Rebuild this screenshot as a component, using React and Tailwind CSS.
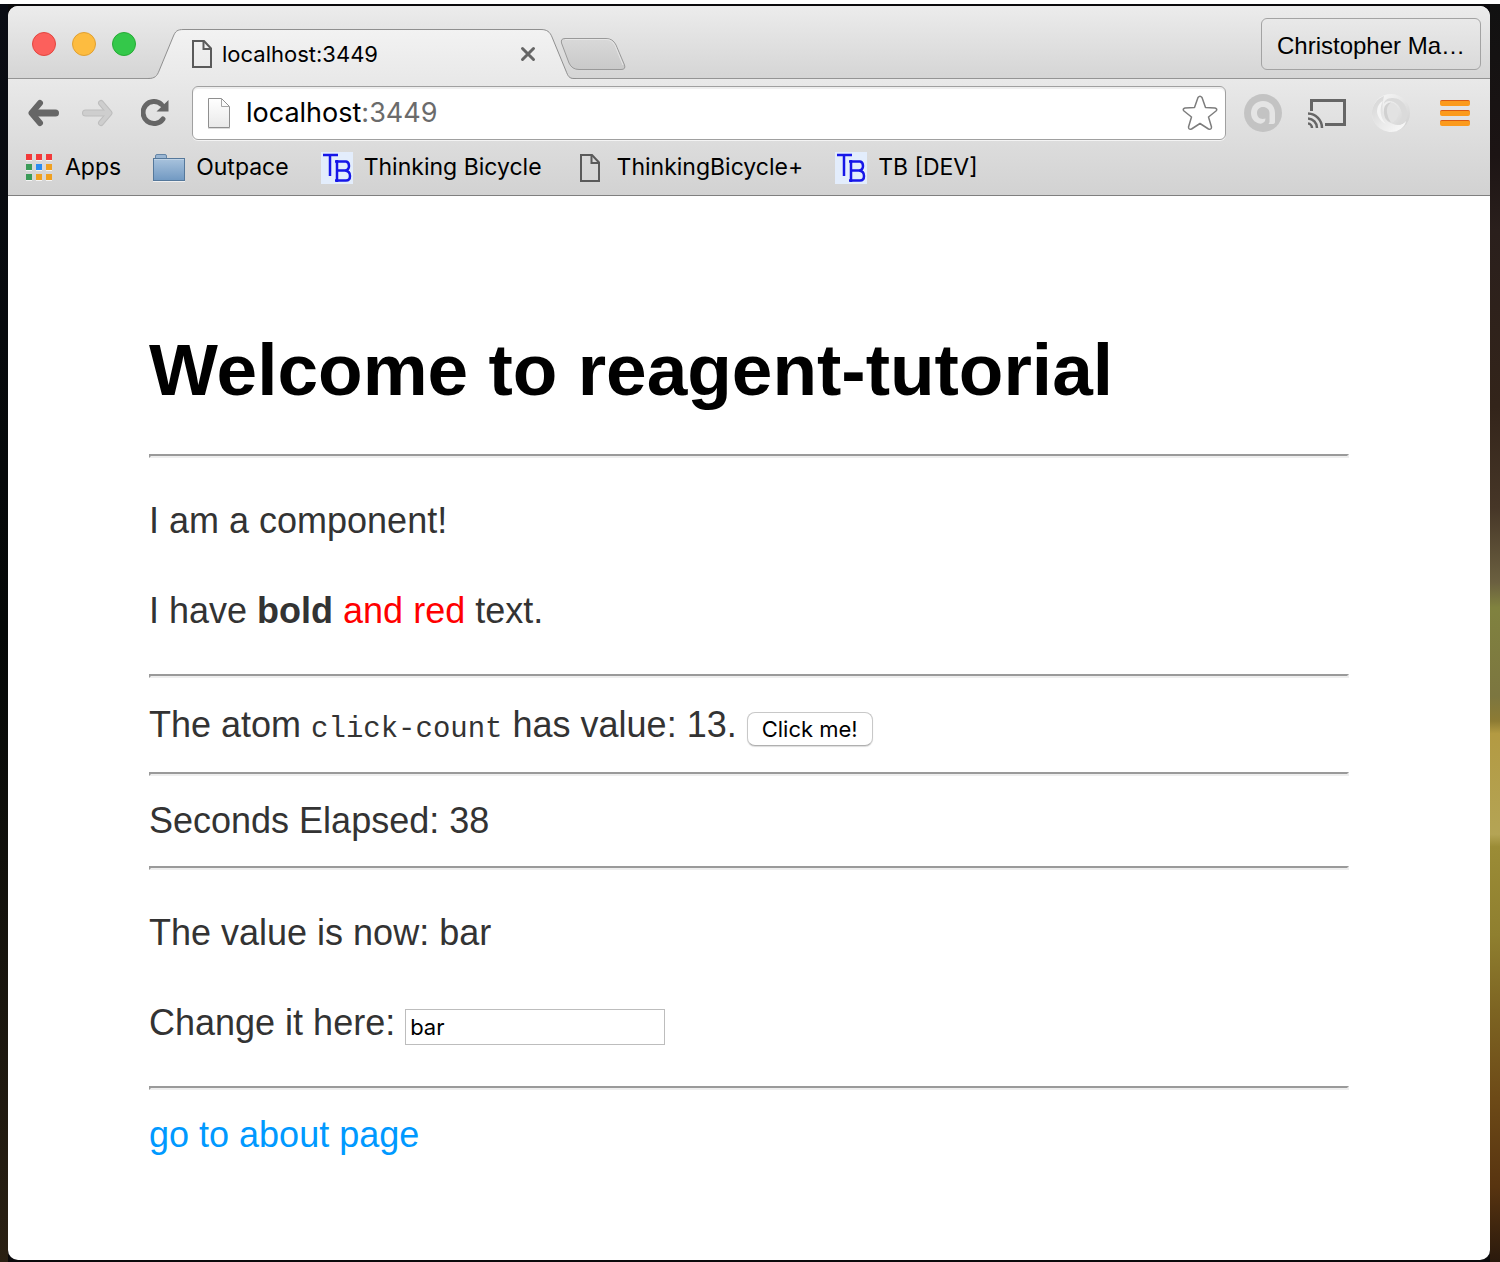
import React, { useState } from "react";

function PageIcon({ className, width = 20, height = 28 }) {
  return (
    <svg className={className} width={width} height={height} viewBox="0 0 20 28" fill="none" stroke="#5a5a5a" strokeWidth="2" aria-hidden="true">
      <path d="M1 1H12L19 8.500V27H1Z" />
      <path d="M11.500 1V9H19" />
    </svg>
  );
}

function OmniboxPageIcon() {
  return (
    <svg className="shrink-0" width="24" height="32" viewBox="0 0 24 32" aria-hidden="true">
      <defs>
        <linearGradient id="sheet" x1="0" y1="0" x2="0" y2="1">
          <stop offset="0" stopColor="#ffffff" />
          <stop offset="1" stopColor="#e9e9e9" />
        </linearGradient>
      </defs>
      <path d="M1.500 1.500H14.500L22.500 9.500V30.500H1.500Z" fill="url(#sheet)" stroke="#8f8f8f" />
      <path d="M14.500 1.500V9.500H22.500" fill="none" stroke="#a5a5a5" />
      <path d="M1 31.500H23" stroke="#dcdcdc" />
    </svg>
  );
}

function AppsIcon() {
  const colors = ["#f23a3a", "#f23a3a", "#f23a3a", "#3b9b58", "#2a8cf0", "#f0a020", "#3b9b58", "#f0a020", "#f0a020"];
  return (
    <svg width="28" height="27" viewBox="0 0 28 27" className="shrink-0" aria-hidden="true">
      {colors.map((c, i) => (
        <g key={i}>
          <rect x={(i % 3) * 10} y={Math.floor(i / 3) * 10 + 1} width="6" height="6" fill="#f4f4f4" />
          <rect x={(i % 3) * 10} y={Math.floor(i / 3) * 10} width="6" height="6" fill={c} />
        </g>
      ))}
    </svg>
  );
}

function FolderIcon() {
  return (
    <svg width="32" height="28" viewBox="0 0 32 28" className="shrink-0" aria-hidden="true">
      <defs>
        <linearGradient id="folder" x1="0" y1="0" x2="0" y2="1">
          <stop offset="0" stopColor="#a9c3dd" />
          <stop offset="1" stopColor="#7199c2" />
        </linearGradient>
      </defs>
      <path d="M2.500 5V2Q2.500 .5 4 .5H12Q13.500 .5 13.500 2V5" fill="#9ab6d3" stroke="#6485a6" />
      <rect x=".5" y="4.500" width="31" height="22" fill="url(#folder)" stroke="#55789b" />
      <path d="M1 5.500H31" stroke="#bfd3e6" />
      <path d="M0 27.500H32" stroke="#f0f0f0" />
    </svg>
  );
}

function BicycleIcon() {
  return (
    <svg width="32" height="32" viewBox="0 0 32 32" className="shrink-0" fill="none" stroke="#1616e8" aria-hidden="true">
      <rect width="32" height="32" fill="#e3edfc" stroke="none" />
      <path d="M2 3H17M9 3V24" strokeWidth="2.500" />
      <path d="M14 9.500H25Q28 10 28 14Q28 18 24 18.500Q29 19 29 24Q29 28.500 25 28.500H14M16 8V30M16 18.500H25" strokeWidth="2.500" />
    </svg>
  );
}

function TabShape() {
  return (
    <svg className="absolute inset-0 h-full w-full" viewBox="0 0 428 50" preserveAspectRatio="none" aria-hidden="true">
      <defs>
        <linearGradient id="tab" x1="0" y1="0" x2="0" y2="1">
          <stop offset="0" stopColor="#f2f2f2" />
          <stop offset="1" stopColor="#e9e9e9" />
        </linearGradient>
      </defs>
      <path d="M0 49.500C7 49.500 9 47 11 42L25 8C27.500 2 29 .5 36 .5H393C399 .5 402 3 404 8L418 42C420 47 421 49.500 426 49.500V50H0Z" fill="url(#tab)" />
      <path d="M0 49.500C7 49.500 9 47 11 42L25 8C27.500 2 29 .5 36 .5H393C399 .5 402 3 404 8L418 42C420 47 421 49.500 426 49.500H428" fill="none" stroke="#8f8f8f" />
    </svg>
  );
}

function TabStrip() {
  return (
    <div className="flex h-[73px] items-end border-b border-[#949494] bg-linear-to-b from-[#ececec] to-[#d5d5d5] font-['Inter',sans-serif]">
      <div className="flex gap-4 self-start pt-[26px] pl-6">
        <button aria-label="Close window" className="size-6 rounded-full border border-[#e2463f] bg-[#fc605c]" />
        <button aria-label="Minimize window" className="size-6 rounded-full border border-[#e0a032] bg-[#fdbc40]" />
        <button aria-label="Zoom window" className="size-6 rounded-full border border-[#27ab35] bg-[#34c84a]" />
      </div>
      <div className="relative -mb-px ml-3 flex h-[50px] w-[428px] shrink-0 items-center">
        <TabShape />
        <PageIcon className="relative ml-11" />
        <span className="relative ml-2.5 flex-1 text-[22px] text-black">localhost:3449</span>
        <button aria-label="Close tab" className="relative mr-10">
          <svg width="16" height="16" viewBox="0 0 16 16" stroke="#666" strokeWidth="3" strokeLinecap="round" aria-hidden="true">
            <path d="M2.500 2.500L13.500 13.500M13.500 2.500L2.500 13.500" />
          </svg>
        </button>
      </div>
      <button aria-label="New tab" className="-ml-4 mb-[7px] shrink-0">
        <svg width="66" height="34" viewBox="0 0 66 34" aria-hidden="true">
          <defs>
            <linearGradient id="newtab" x1="0" y1="0" x2="0" y2="1">
              <stop offset="0" stopColor="#d9d9d9" />
              <stop offset="1" stopColor="#c9c9c9" />
            </linearGradient>
          </defs>
          <path d="M5 1.500H46Q53 1.500 56 8L64.500 28Q66 32.500 61 32.500H19Q12 32.500 9 26L1.500 6Q.5 1.500 5 1.500Z" fill="url(#newtab)" stroke="#999" />
          <path d="M5 2.500H46Q52 2.500 55 8.500L63 28" fill="none" stroke="#e6e6e6" />
        </svg>
      </button>
      <button className="mr-[9px] mb-2 ml-auto h-[52px] w-[220px] shrink-0 rounded-md border border-[#a3a3a3] bg-linear-to-b from-[#e9e9e9] to-[#dadada] pt-1 font-['Liberation_Sans',sans-serif] text-2xl text-black">
        Christopher Ma…
      </button>
    </div>
  );
}

function Toolbar() {
  return (
    <div className="flex items-center pt-[7px] pr-5 pl-[19px]">
      <button aria-label="Back" className="mr-[23px]">
        <svg width="32" height="28" viewBox="0 0 32 28" fill="none" stroke="#666" strokeWidth="7" strokeLinecap="round" aria-hidden="true">
          <path d="M6 14H28.500" />
          <path d="M13 4L4.500 14L13 24" strokeWidth="6" strokeLinejoin="round" />
        </svg>
      </button>
      <button aria-label="Forward" className="mr-[27px]" disabled>
        <svg width="32" height="28" viewBox="0 0 32 28" fill="none" stroke="#bebebe" strokeWidth="7" strokeLinecap="round" aria-hidden="true">
          <path d="M26 14H3.500" />
          <path d="M19 4L27.500 14L19 24" strokeWidth="6" strokeLinejoin="round" />
          <path d="M26 14H3.500" stroke="#cecece" strokeWidth="5" />
          <path d="M19 4L27.500 14L19 24" stroke="#cecece" strokeWidth="4" strokeLinejoin="round" />
        </svg>
      </button>
      <button aria-label="Reload" className="mr-[23px]">
        <svg width="28" height="28" viewBox="0 0 28 28" fill="none" aria-hidden="true">
          <path d="M22 20A11 11 0 1 1 20.500 5.500" stroke="#666" strokeWidth="5" strokeLinecap="round" />
          <path d="M27.500 1V12.500H15.500Z" fill="#666" />
        </svg>
      </button>
      <div className="flex h-[54px] flex-1 items-center rounded-md border border-[#a0a0a0] bg-white pr-[7px] pl-3.5 font-['Inter',sans-serif] text-[27px] shadow-[inset_0_2px_1px_#eeeeee,0_1px_0_#f4f4f4]">
        <OmniboxPageIcon />
        <a href="#top" className="ml-[15px] flex-1 text-black">
          localhost<span className="text-[#6b6b6b]">:3449</span>
        </a>
        <button aria-label="Bookmark this page">
          <svg width="36" height="36" viewBox="0 0 36 36" fill="#fff" stroke="#7d7d7d" strokeWidth="1.500" strokeLinejoin="round" aria-hidden="true">
            <path d="M16 2.500Q18 0 20 2.500L23.500 12.500L33 13Q36 14 34 16L26.500 22L29.500 32Q29.500 35 26.500 34L18 28.500L9.500 34Q6.500 35 6.500 32L9.500 22L2 16Q0 14 3 13L12.500 12.500Z" />
          </svg>
        </button>
      </div>
      <button aria-label="Account extension" className="ml-[18px]">
        <svg width="38" height="38" viewBox="0 0 38 38" aria-hidden="true">
          <circle cx="19" cy="19" r="19" fill="#c3c3c3" />
          <path d="M19 7C26 7 31 12 31 19V28Q31 30 28 30H19C12 30 7 26 7 19C7 12 12 7 19 7Z" fill="#e4e4e4" />
          <path d="M19 13C22.500 13 25.500 15.500 25.500 19V28Q25 31 21 31L15 30.500Q21.500 29 21.500 24.500C16 26 13 23 13 19C13 15.500 15.500 13 19 13Z" fill="#c3c3c3" />
        </svg>
      </button>
      <button aria-label="Cast" className="ml-[26px]">
        <svg width="38" height="30" viewBox="0 0 38 30" fill="none" stroke="#666" aria-hidden="true">
          <path d="M3.500 13V2.500H36.500V26.500H17" strokeWidth="3" />
          <path d="M0 15.500A14.500 14.500 0 0 1 14 30M0 20.500A9.500 9.500 0 0 1 9 30M0 25.500A4.500 4.500 0 0 1 4 30" strokeWidth="2.500" />
        </svg>
      </button>
      <button aria-label="Swirl extension" className="ml-[26px]">
        <svg width="38" height="38" viewBox="0 0 38 38" aria-hidden="true">
          <defs>
            <linearGradient id="swirlRight" x1="0" y1="0" x2="1" y2="1">
              <stop offset="0" stopColor="#fafafa" />
              <stop offset="0.5" stopColor="#e6e6e6" />
              <stop offset="1" stopColor="#cccccc" />
            </linearGradient>
            <linearGradient id="swirlLeft" x1="0" y1="0" x2="1" y2="1">
              <stop offset="0" stopColor="#d4d4d4" />
              <stop offset="0.6" stopColor="#ececec" />
              <stop offset="1" stopColor="#fbfbfb" />
            </linearGradient>
          </defs>
          <circle cx="19" cy="19" r="19" fill="url(#swirlRight)" />
          <path d="M12 2C5 5 0 11 0 19C0 29 9 38 19 38C27 38 33 33 34 27C31 31 26 32 21 30C12 27 8 18 12 2Z" fill="url(#swirlLeft)" />
          <path d="M12 10C14 6 21 6 26 11C31 17 31 25 27 31C30 30 33 28 34 26C38 18 33 4 20 4C15 4 12 7 12 10Z" fill="#dadada" />
          <path d="M11 7C7 14 8 24 14 30C10 28 6 24 5 18C5 13 7 9 11 7Z" fill="#f4f4f4" />
          <ellipse cx="19" cy="18.500" rx="7.500" ry="10" fill="#e2e2e2" />
          <path d="M12 15Q13 9 19 8.500Q14 12 15 19Q16 25 19 28.500Q11 26 12 15Z" fill="#d0d0d0" />
        </svg>
      </button>
      <button aria-label="Menu" className="ml-[30px] flex flex-col gap-1">
        <span className="h-1.5 w-[30px] rounded-xs border-t border-[#d95a14] bg-[#fb9a1c]" />
        <span className="h-1.5 w-[30px] rounded-xs border-t border-[#d95a14] bg-[#fb9a1c]" />
        <span className="h-1.5 w-[30px] rounded-xs border-t border-[#d95a14] bg-[#fb9a1c]" />
      </button>
    </div>
  );
}

function Bookmark({ icon, children }) {
  return (
    <a href="#bookmark" className="flex items-center gap-[11px] whitespace-nowrap">
      {icon}
      {children}
    </a>
  );
}

function BookmarksBar() {
  return (
    <nav aria-label="Bookmarks" className="flex h-[55px] items-center gap-8 pl-[18px] font-['Inter',sans-serif] text-[23px] text-black">
      <Bookmark icon={<AppsIcon />}>Apps</Bookmark>
      <Bookmark icon={<FolderIcon />}>Outpace</Bookmark>
      <Bookmark icon={<BicycleIcon />}>Thinking Bicycle</Bookmark>
      <Bookmark icon={<PageIcon className="mx-1.5" />}>ThinkingBicycle+</Bookmark>
      <Bookmark icon={<BicycleIcon />}>TB [DEV]</Bookmark>
    </nav>
  );
}

function Rule() {
  return <hr className="my-[18px] h-1 border-2 border-t-[#9a9a9a] border-r-[#eeeeee] border-b-[#eeeeee] border-l-[#9a9a9a]" />;
}

function Tutorial() {
  const [clicks, setClicks] = useState(13);
  const [value, setValue] = useState("bar");
  return (
    <main id="top" className="mx-auto w-full max-w-[1200px] pt-[138px] pb-20 font-['Liberation_Sans',Helvetica,sans-serif] text-4xl leading-[54px] text-[#333]">
      <h1 className="mb-12 text-[73px] leading-[72px] font-bold text-black">Welcome to reagent-tutorial</h1>
      <Rule />
      <p className="my-9">I am a component!</p>
      <p className="my-9">
        I have <strong>bold</strong> <span className="text-[#f00]">and red</span> text.
      </p>
      <Rule />
      <div className="leading-[58px]">
        The atom <code className="font-['Liberation_Mono',monospace] text-[29px] leading-none">click-count</code> has value: {clicks}.{" "}
        <button
          onClick={() => setClicks(clicks + 1)}
          className="h-[34px] rounded-lg border border-[#c8c8c8] border-b-[#b0b0b0] bg-white px-3.5 align-baseline font-['Inter',sans-serif] text-[22px] leading-8 text-black shadow-[0_1px_1px_#dddddd]"
        >
          Click me!
        </button>
      </div>
      <Rule />
      <div>Seconds Elapsed: 38</div>
      <Rule />
      <p className="my-9">The value is now: {value}</p>
      <p className="my-9">
        <label htmlFor="value">Change it here:</label>{" "}
        <input
          id="value"
          type="text"
          value={value}
          onChange={(e) => setValue(e.target.value)}
          className="h-9 w-[260px] border border-[#bdbdbd] bg-white px-1 align-baseline font-['Inter',sans-serif] text-[22px] leading-8 text-black"
        />
      </p>
      <Rule />
      <a href="#about" className="text-[#09f]">go to about page</a>
    </main>
  );
}

export default function App() {
  return (
    <div className="flex min-h-screen flex-col bg-white pt-1">
      <div className="flex flex-1 bg-[#0b0a0c] py-0.5">
        <div className="-my-0.5 w-2 shrink-0 bg-linear-to-b from-[#0a0c14] via-[#050807] to-[#2a2013]" />
        <div className="flex min-w-0 flex-1 flex-col overflow-hidden rounded-[10px] bg-white">
          <TabStrip />
          <header className="border-b border-[#7f7f7f] bg-linear-to-b from-[#e9e9e9] to-[#d2d2d2]">
            <Toolbar />
            <BookmarksBar />
          </header>
          <Tutorial />
        </div>
        <div className="-my-0.5 w-2.5 shrink-0 bg-[linear-gradient(180deg,#111_0%,#1c1414_12%,#2a1f1c_18%,#33241a_32%,#463627_40%,#6b6040_46%,#80823f_48%,#7c7640_55%,#8d7b33_57%,#b39a42_58%,#b4a455_66%,#9b8c36_67%,#8f7f2f_74%,#7d6422_80%,#6d4a17_87%,#583410_94%,#2a190c_100%)]" />
      </div>
    </div>
  );
}
